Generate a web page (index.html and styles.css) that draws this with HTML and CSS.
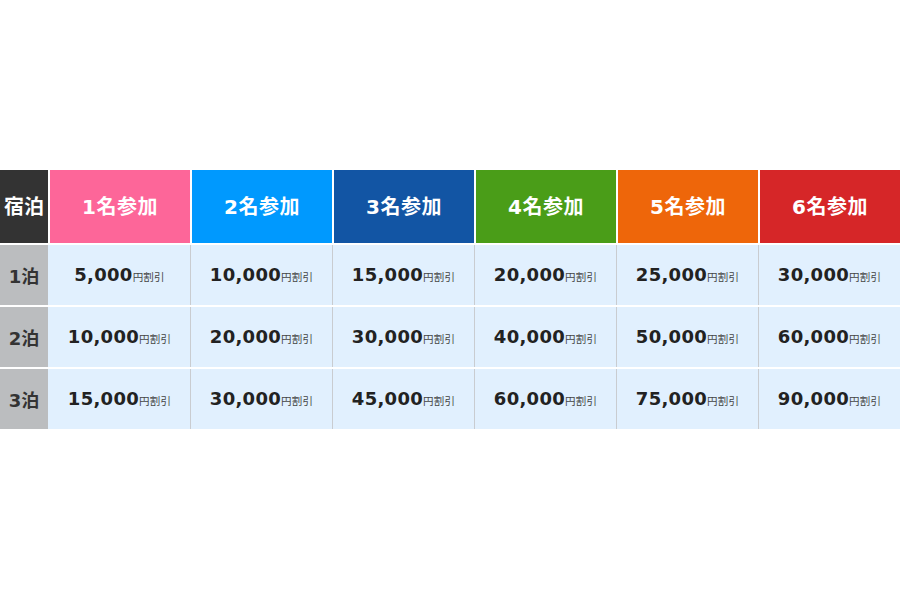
FILE: index.html
```html
<!DOCTYPE html>
<html lang="ja">
<head>
<meta charset="utf-8">
<title>割引表</title>
<link rel="stylesheet" href="styles.css">
</head>
<body>
<div class="page">
  <div class="table">
    <div class="hd hd-0">宿泊</div>
    <div class="hd hd-1">1名参加</div>
    <div class="hd hd-2">2名参加</div>
    <div class="hd hd-3">3名参加</div>
    <div class="hd hd-4">4名参加</div>
    <div class="hd hd-5">5名参加</div>
    <div class="hd hd-6">6名参加</div>

    <div class="rh">1泊</div>
    <div class="cell"><span class="val"><span class="num">5,000</span><span class="unit">円割引</span></span></div>
    <div class="cell"><span class="val"><span class="num">10,000</span><span class="unit">円割引</span></span></div>
    <div class="cell"><span class="val"><span class="num">15,000</span><span class="unit">円割引</span></span></div>
    <div class="cell"><span class="val"><span class="num">20,000</span><span class="unit">円割引</span></span></div>
    <div class="cell"><span class="val"><span class="num">25,000</span><span class="unit">円割引</span></span></div>
    <div class="cell"><span class="val"><span class="num">30,000</span><span class="unit">円割引</span></span></div>

    <div class="rh">2泊</div>
    <div class="cell"><span class="val"><span class="num">10,000</span><span class="unit">円割引</span></span></div>
    <div class="cell"><span class="val"><span class="num">20,000</span><span class="unit">円割引</span></span></div>
    <div class="cell"><span class="val"><span class="num">30,000</span><span class="unit">円割引</span></span></div>
    <div class="cell"><span class="val"><span class="num">40,000</span><span class="unit">円割引</span></span></div>
    <div class="cell"><span class="val"><span class="num">50,000</span><span class="unit">円割引</span></span></div>
    <div class="cell"><span class="val"><span class="num">60,000</span><span class="unit">円割引</span></span></div>

    <div class="rh">3泊</div>
    <div class="cell"><span class="val"><span class="num">15,000</span><span class="unit">円割引</span></span></div>
    <div class="cell"><span class="val"><span class="num">30,000</span><span class="unit">円割引</span></span></div>
    <div class="cell"><span class="val"><span class="num">45,000</span><span class="unit">円割引</span></span></div>
    <div class="cell"><span class="val"><span class="num">60,000</span><span class="unit">円割引</span></span></div>
    <div class="cell"><span class="val"><span class="num">75,000</span><span class="unit">円割引</span></span></div>
    <div class="cell"><span class="val"><span class="num">90,000</span><span class="unit">円割引</span></span></div>
  </div>
</div>
</body>
</html>
```
FILE: styles.css
```css
html, body {
  margin: 0;
  padding: 0;
  background: #ffffff;
}
body {
  width: 900px;
  height: 600px;
  font-family: "DejaVu Sans", "Noto Sans CJK JP", sans-serif;
}
.page {
  padding-top: 170px;
}
.table {
  display: grid;
  grid-template-columns: 48px repeat(6, 1fr);
  grid-template-rows: 73px 60px 60px 60px;
  row-gap: 2px;
  background: #ffffff;
}
.hd {
  display: flex;
  align-items: center;
  justify-content: center;
  padding-bottom: 3px;
  box-sizing: border-box;
  color: #ffffff;
  font-weight: bold;
  font-size: 20px;
  letter-spacing: 0.5px;
  font-family: "DejaVu Sans", "Noto Sans CJK JP", sans-serif;
  border-left: 2px solid #ffffff;
}
.hd-0 { background: #333333; border-left: none; font-size: 20px; letter-spacing: 0; }
.hd-1 { background: #fd6699; }
.hd-2 { background: #0099fe; }
.hd-3 { background: #1255a4; }
.hd-4 { background: #4a9d18; }
.hd-5 { background: #ee660a; }
.hd-6 { background: #d62628; }
.rh {
  display: flex;
  align-items: center;
  justify-content: center;
  background: #bbbdbf;
  color: #333333;
  font-weight: bold;
  font-size: 18px;
}
.cell {
  display: flex;
  align-items: center;
  justify-content: center;
  background: #e1f0fe;
  border-left: 1px solid #c9ccd0;
  color: #222222;
}
.rh + .cell { border-left: 1px solid #e1f0fe; }
.val {
  line-height: 1.2;
}
.num {
  font-weight: bold;
  font-size: 18px;
  letter-spacing: 0.3px;
}
.unit {
  font-size: 10.5px;
  color: #444444;
  letter-spacing: 0.2px;
  font-family: "Noto Sans CJK JP", sans-serif;
}
```
